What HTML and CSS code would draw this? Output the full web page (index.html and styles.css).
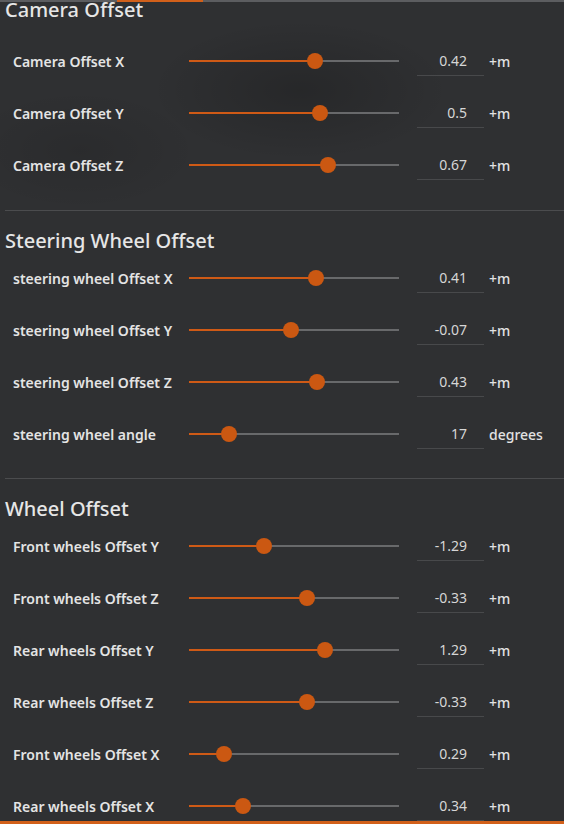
FILE: index.html
```html
<!DOCTYPE html>
<html lang="en">
<head>
    <meta charset="UTF-8">
    <meta name="viewport" content="width=device-width, initial-scale=1.0">
    <title>Vehicle Offsets</title>
<link rel="stylesheet" href="styles.css">
</head>

<body>
    <div class="tabbar"><div class="tabbar-active"></div></div>

    <div class="panel">
        <section class="group first">
            <h2>Camera Offset</h2>
            <div class="row">
                <span class="label">Camera Offset X</span>
                <div class="slider"><div class="fill" style="width:60%"></div><div class="thumb" style="left:60%"></div></div>
                <span class="value">0.42</span>
                <span class="unit">+m</span>
            </div>
            <div class="row">
                <span class="label">Camera Offset Y</span>
                <div class="slider"><div class="fill" style="width:62.4%"></div><div class="thumb" style="left:62.4%"></div></div>
                <span class="value">0.5</span>
                <span class="unit">+m</span>
            </div>
            <div class="row">
                <span class="label">Camera Offset Z</span>
                <div class="slider"><div class="fill" style="width:66.2%"></div><div class="thumb" style="left:66.2%"></div></div>
                <span class="value">0.67</span>
                <span class="unit">+m</span>
            </div>
        </section>

        <section class="group">
            <h2>Steering Wheel Offset</h2>
            <div class="row">
                <span class="label">steering wheel Offset X</span>
                <div class="slider"><div class="fill" style="width:60.5%"></div><div class="thumb" style="left:60.5%"></div></div>
                <span class="value">0.41</span>
                <span class="unit">+m</span>
            </div>
            <div class="row">
                <span class="label">steering wheel Offset Y</span>
                <div class="slider"><div class="fill" style="width:48.6%"></div><div class="thumb" style="left:48.6%"></div></div>
                <span class="value">-0.07</span>
                <span class="unit">+m</span>
            </div>
            <div class="row">
                <span class="label">steering wheel Offset Z</span>
                <div class="slider"><div class="fill" style="width:61%"></div><div class="thumb" style="left:61%"></div></div>
                <span class="value">0.43</span>
                <span class="unit">+m</span>
            </div>
            <div class="row">
                <span class="label">steering wheel angle</span>
                <div class="slider"><div class="fill" style="width:19%"></div><div class="thumb" style="left:19%"></div></div>
                <span class="value">17</span>
                <span class="unit">degrees</span>
            </div>
        </section>

        <section class="group">
            <h2>Wheel Offset</h2>
            <div class="row">
                <span class="label">Front wheels Offset Y</span>
                <div class="slider"><div class="fill" style="width:35.7%"></div><div class="thumb" style="left:35.7%"></div></div>
                <span class="value">-1.29</span>
                <span class="unit">+m</span>
            </div>
            <div class="row">
                <span class="label">Front wheels Offset Z</span>
                <div class="slider"><div class="fill" style="width:56.2%"></div><div class="thumb" style="left:56.2%"></div></div>
                <span class="value">-0.33</span>
                <span class="unit">+m</span>
            </div>
            <div class="row">
                <span class="label">Rear wheels Offset Y</span>
                <div class="slider"><div class="fill" style="width:64.8%"></div><div class="thumb" style="left:64.8%"></div></div>
                <span class="value">1.29</span>
                <span class="unit">+m</span>
            </div>
            <div class="row">
                <span class="label">Rear wheels Offset Z</span>
                <div class="slider"><div class="fill" style="width:56.2%"></div><div class="thumb" style="left:56.2%"></div></div>
                <span class="value">-0.33</span>
                <span class="unit">+m</span>
            </div>
            <div class="row">
                <span class="label">Front wheels Offset X</span>
                <div class="slider"><div class="fill" style="width:16.7%"></div><div class="thumb" style="left:16.7%"></div></div>
                <span class="value">0.29</span>
                <span class="unit">+m</span>
            </div>
            <div class="row">
                <span class="label">Rear wheels Offset X</span>
                <div class="slider"><div class="fill" style="width:25.7%"></div><div class="thumb" style="left:25.7%"></div></div>
                <span class="value">0.34</span>
                <span class="unit">+m</span>
            </div>
        </section>
    </div>

    <div class="scrollbar"></div>
</body>
</html>
```

FILE: styles.css
```css
html,
body {
    height: 100%;
}

body {
    margin: 0;
    padding: 0;
    overflow: hidden;
    font-family: 'Noto Sans', 'Open Sans', sans-serif;
    background-color: #2f3032;
    background-image:
        radial-gradient(ellipse 150px 70px at 300px 90px, rgba(0, 0, 0, 0.18), transparent),
        radial-gradient(ellipse 120px 60px at 80px 150px, rgba(0, 0, 0, 0.1), transparent);
    color: #e4e4e4;
}

.tabbar {
    position: fixed;
    top: 0;
    left: 0;
    right: 0;
    height: 2px;
    background-color: #5c5d60;
    z-index: 2;
}

.tabbar-active {
    margin-left: 117px;
    width: 86px;
    height: 100%;
    background-color: #d2601a;
}

.scrollbar {
    position: fixed;
    left: 0;
    right: 0;
    bottom: 0;
    height: 3px;
    background-color: #d2601a;
    z-index: 2;
}

.panel {
    padding-left: 5px;
}

.group {
    border-bottom: 1px solid #4b4c4e;
    padding-bottom: 18px;
}

.group h2 {
    margin: 18px 0 -1px 0;
    font-size: 20px;
    font-weight: 500;
    line-height: 24px;
    color: #e6e6e6;
}

.group.first h2 {
    margin-top: -2px;
    margin-bottom: 13px;
}

.group.first {
    padding-bottom: 19px;
}

.row {
    display: flex;
    align-items: center;
    height: 52px;
    padding-left: 8px;
}

.label {
    width: 176px;
    font-size: 14px;
    font-weight: 600;
    color: #e4e4e4;
}

.slider {
    position: relative;
    width: 210px;
    height: 2px;
    background-color: #68696b;
}

.fill {
    height: 100%;
    background-color: #cf5a16;
}

.thumb {
    position: absolute;
    top: 50%;
    width: 16px;
    height: 16px;
    margin: -8px 0 0 -8px;
    border-radius: 50%;
    background-color: #cb5812;
}

.value {
    box-sizing: border-box;
    align-self: flex-start;
    width: 67px;
    margin: 16px 0 0 18px;
    padding: 0 17px 4px 0;
    text-align: right;
    font-size: 14px;
    line-height: 20px;
    color: #d6d6d6;
    border-bottom: 1px solid #48494b;
}

.unit {
    margin-left: 5px;
    font-size: 14px;
    font-weight: 500;
    color: #e2e2e2;
}
```
